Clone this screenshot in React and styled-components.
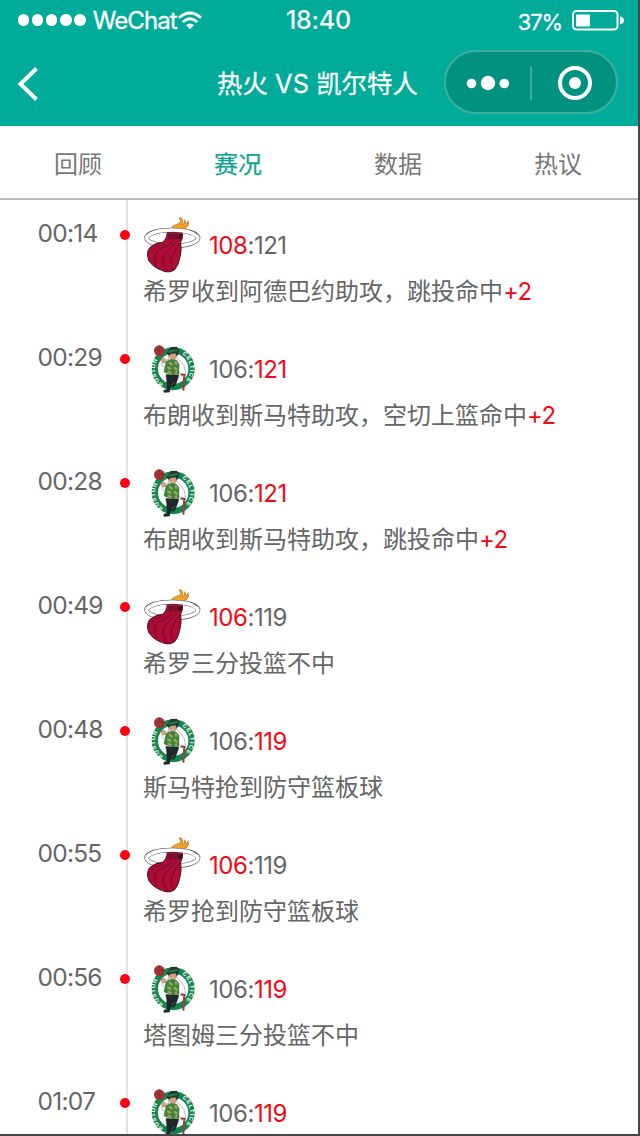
import React from "react";
import styled, { createGlobalStyle } from "styled-components";

const Global = createGlobalStyle`
  * { box-sizing: border-box; }
  body { margin: 0; background: #464648; }
`;
const Screen = styled.div`
  width: 638px;
  height: 1134px;
  overflow: hidden;
  background: #fff;
  color: #666;
  font-family: Inter, "Noto Sans CJK SC", sans-serif;
  font-size: 24px;
  white-space: nowrap;
`;
const Header = styled.header`
  height: 126px;
  background: #00ab99;
  color: #fff;
`;
const StatusBar = styled.div`
  height: 40px;
  display: grid;
  grid-template-columns: 268px 1fr auto;
  align-items: center;
  padding: 0 14px 0 18px;
`;
const Carrier = styled.div`
  display: flex;
  align-items: center;
  font-size: 24px;
  letter-spacing: -0.9px;
  -webkit-text-stroke: 0.3px #fff;
`;
const Signal = styled.div`
  display: flex;
  gap: 2.8px;
  margin-right: 7px;
`;
const Bar = styled.i`
  width: 11.3px;
  height: 11.3px;
  border-radius: 50%;
  background: #fff;
`;
const Clock = styled.div`
  margin-top: -1px;
  font-size: 25px;
  font-weight: 500;
  letter-spacing: -0.3px;
`;
const Power = styled.div`
  display: flex;
  justify-content: flex-end;
  align-items: center;
  gap: 10px;
  font-size: 22px;
  letter-spacing: -1.1px;
  -webkit-text-stroke: 0.3px #fff;
`;
const Percent = styled.span`
  padding-top: 4px;
`;
const NavBar = styled.div`
  height: 86px;
  display: grid;
  grid-template-columns: 217px 227px 174px;
  align-items: center;
`;
const Back = styled.svg`
  margin: 2px 0 0 17px;
`;
const Title = styled.h1`
  margin: 0;
  padding-bottom: 2px;
  font-size: 25.4px;
  font-weight: 400;
  letter-spacing: 0.05px;
  -webkit-text-stroke: 0.3px #fff;
`;
const Capsule = styled.div`
  width: 174px;
  height: 64px;
  margin-top: -2px;
  border: 2px solid #3cafa0;
  border-radius: 32px;
  background: #00917f;
`;
const Tabs = styled.nav`
  width: 640px;
  height: 74px;
  margin-left: -2px;
  display: grid;
  grid-template-columns: repeat(4, 160px);
  border-bottom: 2px solid #bbb;
`;
const Tab = styled.div`
  display: flex;
  justify-content: center;
  align-items: center;
  color: ${(p) => (p.$active ? "#10a492" : "#777")};
  -webkit-text-stroke: ${(p) => (p.$active ? "0.25px #10a492" : "0")};
`;
const Feed = styled.main`
  height: 934px;
  overflow: hidden;
`;
const Event = styled.article`
  height: 124px;
  display: grid;
  grid-template-columns: 120px 8px 1fr;
`;
const Time = styled.time`
  padding: 19px 0 0 37.5px;
  line-height: 29px;
  font-size: 24.5px;
  letter-spacing: -0.75px;
`;
const Rail = styled.div`
  border-right: 2px solid #e2e2e2;
`;
const Dot = styled.div`
  width: 10px;
  height: 10px;
  margin-top: 30px;
  border-radius: 50%;
  background: #ff0012;
`;
const Details = styled.div`
  padding: 15px 0 0 15px;
`;
const ScoreLine = styled.div`
  height: 60px;
  display: flex;
  gap: 5px;
  padding-left: 1px;
`;
const Score = styled.div`
  padding-top: 17px;
  line-height: 28px;
  letter-spacing: -0.45px;
`;
const Red = styled.span`
  color: #f30816;
`;
const Description = styled.p`
  margin: 0;
  line-height: 34px;
`;
const Points = styled(Red)`
  letter-spacing: -0.5px;
`;

const Wifi = () => (
  <svg width="26" height="20" viewBox="0 0 26 20" fill="none" stroke="#fff" strokeWidth="2.8">
    <path d="M2 7.8 Q13 -1.8 24 7.8M5.7 12 Q13 5.6 20.3 12" />
    <path d="M9 15 Q13 12 17 15 L13 19.3Z" fill="#fff" stroke="none" />
  </svg>
);
const Battery = () => (
  <svg width="52" height="21" viewBox="0 0 52 21">
    <rect x="1" y="1" width="44.5" height="18.5" rx="3.5" fill="none" stroke="#fff" strokeWidth="2" />
    <rect x="4" y="4.5" width="14" height="12" rx="1" fill="#fff" />
    <path d="M48 6.5Q52 7 52 10.3Q52 13.8 48 14.3Z" fill="#fff" />
  </svg>
);
const MenuGlyphs = () => (
  <svg width="170" height="60" viewBox="0 0 170 60" fill="#fff">
    <circle cx="25.5" cy="31.5" r="4.8" />
    <circle cx="42" cy="31" r="7.2" />
    <circle cx="58.3" cy="31.5" r="4.8" />
    <path d="M85 14V48" stroke="#3dac9d" strokeWidth="2" />
    <circle cx="129" cy="31" r="15" fill="none" stroke="#fff" strokeWidth="4" />
    <circle cx="129" cy="31" r="6" />
  </svg>
);

const HeatLogo = () => (
  <svg width="60" height="60" viewBox="3 -2 180 180">
    <ellipse cx="88" cy="67" rx="77" ry="24" fill="none" stroke="#5b5b65" strokeWidth="14" />
    <ellipse cx="88" cy="67" rx="77" ry="24" fill="none" stroke="#fff" strokeWidth="10" />
    <path d="M84 44Q86 29 99 27Q113 23 113 17L109 6Q118 5 119 15Q121 23 117 28Q127 24 124 12L131 24Q134 21 135 15Q141 27 129 37L118 46Z" fill="#f0a126" stroke="#a96b22" strokeWidth="2" />
    <path d="M73 50L118 50Q121 68 113 79Q117 105 110 128Q106 150 94 163Q76 174 56 164Q30 155 17 134Q9 110 20 96Q34 82 58 80Q71 72 73 50Z" fill="#b00b35" stroke="#481020" strokeWidth="3" />
    <path d="M91 78Q77 89 49 101Q26 119 40 154M101 77Q78 101 70 111Q47 135 74 167M113 80Q100 94 93 111Q76 137 91 163M61 87Q37 91 26 108" fill="none" stroke="#62112a" strokeWidth="3" />
    <path d="M75 55H117L114 72Q105 66 99 73L91 67L84 73L75 69Z" fill="#781030" />
    <path d="M107 56L117 58L113 72L106 67Z" fill="#37141f" />
    <path d="M13 61Q32 43 88 43Q144 43 164 62" fill="none" stroke="#5b5b65" strokeWidth="14" />
    <path d="M12 63Q32 43 88 43Q144 43 165 64" fill="none" stroke="#fff" strokeWidth="10" />
  </svg>
);

const CelticsLogo = ({ id }) => (
  <svg width="60" height="60" viewBox="1 -2 180 180">
    <defs>
      <path id={`west-${id}`} d="M61 135A54 54 0 0 1 54 46" />
      <path id={`east-${id}`} d="M112 42A51 51 0 0 1 119 128" />
    </defs>
    <circle cx="88.5" cy="87" r="55" fill="#fff" stroke="#16864f" strokeWidth="19" />
    <g fill="#fff" fontFamily="Liberation Sans, sans-serif" fontSize="17" fontWeight="700">
      <text><textPath href={`#west-${id}`} startOffset="3" textLength="83">BOSTON</textPath></text>
      <text><textPath href={`#east-${id}`} startOffset="4" textLength="88">CELTICS</textPath></text>
    </g>
    <path d="M78 48L67 70L58 63L54 75L65 86L80 73L98 51L121 78L126 100L113 109L106 96L104 116L66 112L69 77Z" fill="#fff" stroke="#999" strokeWidth="2" />
    <path d="M67 104L106 105L100 126Q85 130 84 138L79 150L78 158L61 159L59 152L70 148Z" fill="#20272b" />
    <path d="M98 112L94 132L86 143" fill="none" stroke="#20272b" strokeWidth="8" />
    <path d="M67 66L82 57L98 60L107 72L106 104L84 106L60 97Z" fill="#398447" />
    <path d="M76 68L86 76M95 65L99 75M71 82L82 89M91 83L101 91M73 96L83 101M94 101L101 96" stroke="#a9a344" strokeWidth="7" />
    <path d="M79 42L98 42L98 53L87 61L77 51Z" fill="#d9a27b" stroke="#634336" />
    <path d="M74 32L81 22L99 21L107 30L104 45L98 50L97 41L81 42L76 49L69 41Z" fill="#20382e" />
    <path d="M74 36L103 31" stroke="#2a764b" strokeWidth="6" />
    <path d="M51 61Q60 50 68 61L65 70L57 69Z" fill="#d9a27b" stroke="#795447" />
    <circle cx="47" cy="33" r="16" fill="#a73336" />
    <path d="M33 29L62 35M46 17L48 48M36 22Q45 32 38 44M59 24Q50 34 57 44" fill="none" stroke="#7c3032" strokeWidth="2" />
    <path d="M112 104L126 107M122 105L119 153" stroke="#984132" strokeWidth="6" />
  </svg>
);

const events = [
  ["00:14", "heat", "108", "121", "希罗收到阿德巴约助攻，跳投命中", "+2"],
  ["00:29", "celtics", "106", "121", "布朗收到斯马特助攻，空切上篮命中", "+2"],
  ["00:28", "celtics", "106", "121", "布朗收到斯马特助攻，跳投命中", "+2"],
  ["00:49", "heat", "106", "119", "希罗三分投篮不中"],
  ["00:48", "celtics", "106", "119", "斯马特抢到防守篮板球"],
  ["00:55", "heat", "106", "119", "希罗抢到防守篮板球"],
  ["00:56", "celtics", "106", "119", "塔图姆三分投篮不中"],
  ["01:07", "celtics", "106", "119", ""],
];

export default function App() {
  return (
    <Screen>
      <Global />
      <Header>
        <StatusBar>
          <Carrier>
            <Signal>{[0, 1, 2, 3, 4].map((n) => <Bar key={n} />)}</Signal>
            WeChat<Wifi />
          </Carrier>
          <Clock>18:40</Clock>
          <Power><Percent>37%</Percent><Battery /></Power>
        </StatusBar>
        <NavBar>
          <Back width="22" height="36" viewBox="0 0 22 36" fill="none" stroke="#fff" strokeWidth="4">
            <path d="M19.5 2.5L3.5 18L19.5 33.5" />
          </Back>
          <Title>热火 VS 凯尔特人</Title>
          <Capsule><MenuGlyphs /></Capsule>
        </NavBar>
      </Header>
      <Tabs>
        {["回顾", "赛况", "数据", "热议"].map((t, i) => <Tab key={t} $active={i === 1}>{t}</Tab>)}
      </Tabs>
      <Feed>
        {events.map(([time, team, home, away, text, points], i) => (
          <Event key={time}>
            <Time>{time}</Time>
            <Rail><Dot /></Rail>
            <Details>
              <ScoreLine>
                {team === "heat" ? <HeatLogo /> : <CelticsLogo id={i} />}
                <Score>
                  {team === "heat" ? <Red>{home}</Red> : home}:{team === "celtics" ? <Red>{away}</Red> : away}
                </Score>
              </ScoreLine>
              <Description>{text}{points && <Points>{points}</Points>}</Description>
            </Details>
          </Event>
        ))}
      </Feed>
    </Screen>
  );
}
